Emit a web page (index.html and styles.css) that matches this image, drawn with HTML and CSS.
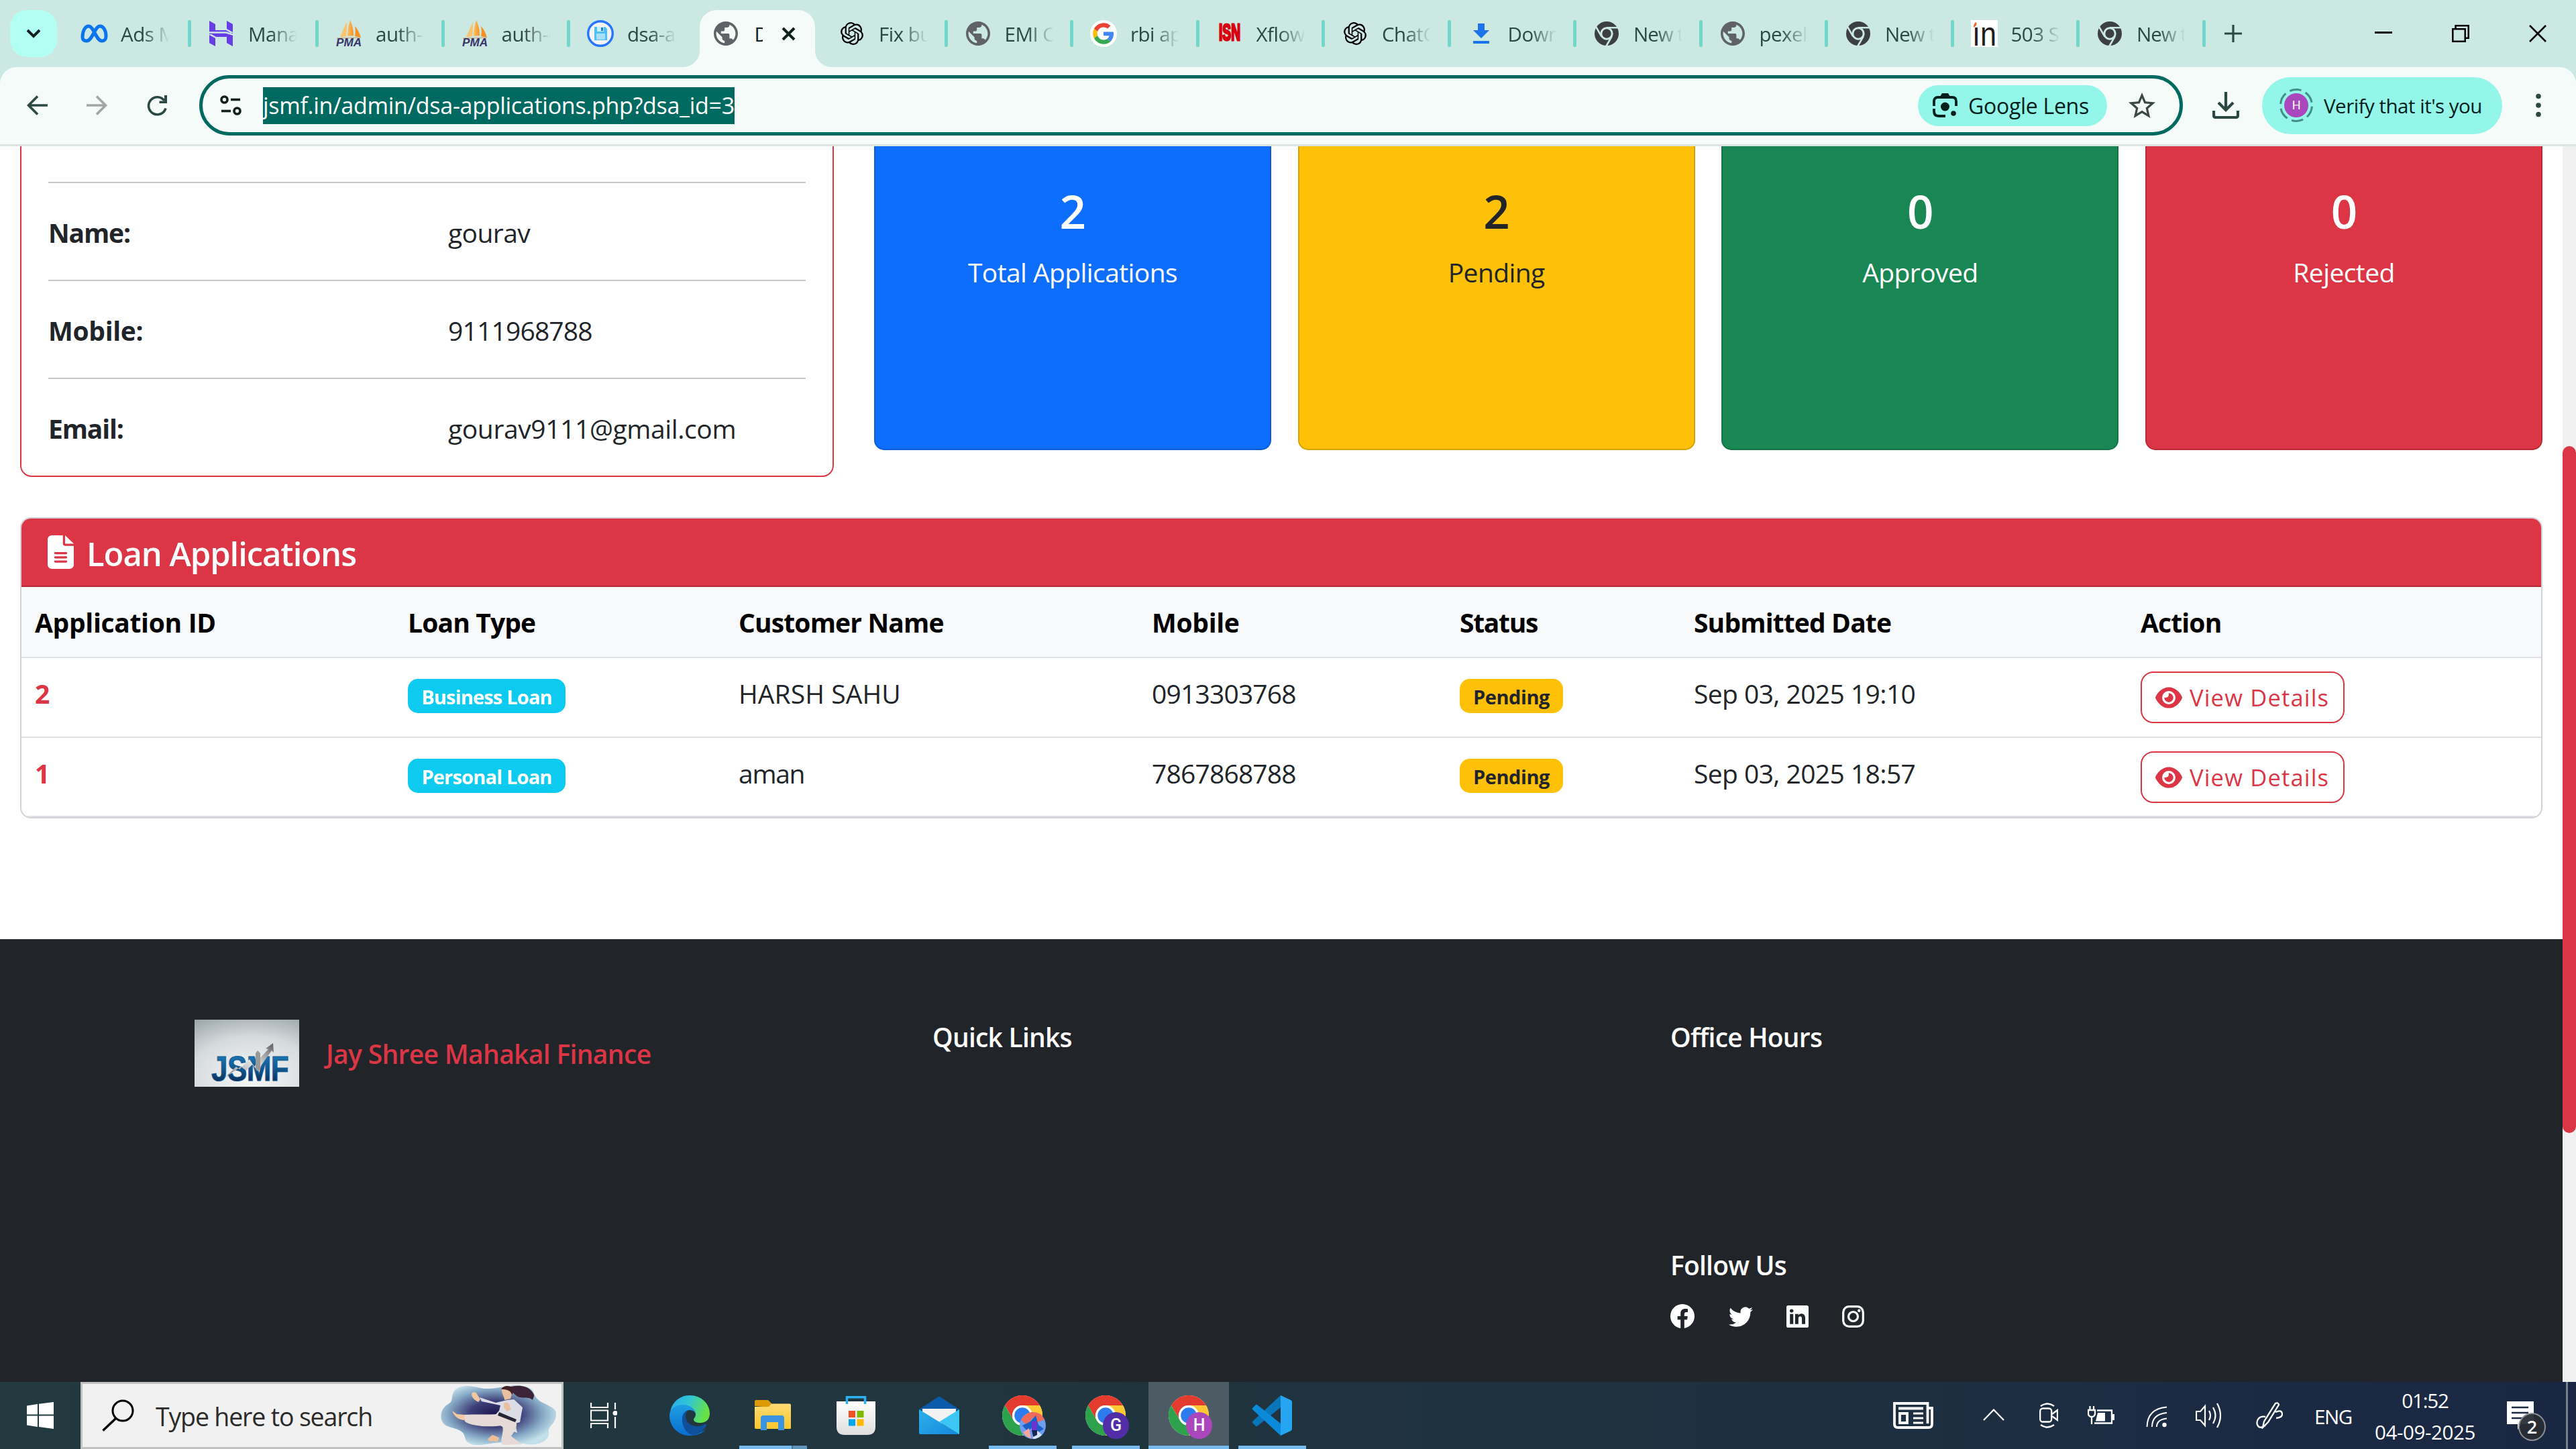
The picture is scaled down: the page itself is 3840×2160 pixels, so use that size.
FILE: index.html
```html
<!DOCTYPE html>
<html lang="en">
<head>
<meta charset="utf-8">
<title>DSA Applications</title>
<link rel="stylesheet" href="styles.css">
</head>
<body>
<svg class="defs" aria-hidden="true">
  <defs>
    <linearGradient id="gEdge1" x1="0" y1="0" x2="1" y2="0.3"><stop offset="0" stop-color="#2aa9ec"/><stop offset=".5" stop-color="#31c5d5"/><stop offset="1" stop-color="#66e248"/></linearGradient>
    <linearGradient id="gEdge2" x1="0" y1="0" x2="0" y2="1"><stop offset="0" stop-color="#1f9fe3"/><stop offset="1" stop-color="#0a6dd0"/></linearGradient>
    <linearGradient id="gFolder" x1="0" y1="0" x2="0" y2="1"><stop offset="0" stop-color="#ffdb73"/><stop offset="1" stop-color="#fcc72e"/></linearGradient>
    <linearGradient id="gStore" x1="0" y1="0" x2="0" y2="1"><stop offset="0" stop-color="#ffffff"/><stop offset="1" stop-color="#dedede"/></linearGradient>
    <linearGradient id="gMail" x1="0" y1="0" x2="1" y2="1"><stop offset="0" stop-color="#2fb0ec"/><stop offset="1" stop-color="#1489dc"/></linearGradient>
    <linearGradient id="gInk" x1="0" y1="0" x2="0" y2="1"><stop offset="0" stop-color="#1d84c4"/><stop offset=".5" stop-color="#12588f"/><stop offset="1" stop-color="#08193f"/></linearGradient>
    <linearGradient id="gSteel" x1="0" y1="1" x2="1" y2="0"><stop offset="0" stop-color="#8b8b8b"/><stop offset=".5" stop-color="#e2e2e2"/><stop offset="1" stop-color="#5c5c5c"/></linearGradient>
    <radialGradient id="gPaper" cx=".55" cy=".85" r="1"><stop offset="0" stop-color="#f7f8f8"/><stop offset=".6" stop-color="#d5dadc"/><stop offset="1" stop-color="#9ba5aa"/></radialGradient>
    <radialGradient id="gSplash" cx=".47" cy=".48" r=".55"><stop offset="0" stop-color="#1c1650"/><stop offset=".4" stop-color="#3d3f78"/><stop offset=".75" stop-color="#86a9c6"/><stop offset="1" stop-color="#c3e0ea"/></radialGradient>
    <linearGradient id="gSail" x1="0" y1="0" x2="1" y2="0"><stop offset="0" stop-color="#fbc36b"/><stop offset="1" stop-color="#f7901e"/></linearGradient>
  </defs>
  <symbol id="globe" viewBox="2 2 20 20"><path d="M12 2C6.48 2 2 6.48 2 12s4.48 10 10 10 10-4.48 10-10S17.52 2 12 2zm-1 17.93c-3.95-.49-7-3.85-7-7.93 0-.62.08-1.21.21-1.79L9 15v1c0 1.1.9 2 2 2v1.93zm6.9-2.54c-.26-.81-1-1.39-1.9-1.39h-1v-3c0-.55-.45-1-1-1H8v-2h2c.55 0 1-.45 1-1V7h2c1.1 0 2-.9 2-2v-.41c2.93 1.19 5 4.06 5 7.41 0 2.08-.8 3.97-2.1 5.39z" fill="#5f6368"/></symbol>
  <symbol id="openai" viewBox="0 0 24 24"><path d="M22.2819 9.8211a5.9847 5.9847 0 0 0-.5157-4.9108 6.0462 6.0462 0 0 0-6.5098-2.9A6.0651 6.0651 0 0 0 4.9807 4.1818a5.9847 5.9847 0 0 0-3.9977 2.9 6.0462 6.0462 0 0 0 .7427 7.0966 5.98 5.98 0 0 0 .511 4.9107 6.051 6.051 0 0 0 6.5146 2.9001A5.9847 5.9847 0 0 0 13.2599 24a6.0557 6.0557 0 0 0 5.7718-4.2058 5.9894 5.9894 0 0 0 3.9977-2.9001 6.0557 6.0557 0 0 0-.7475-7.0729zm-9.022 12.6081a4.4755 4.4755 0 0 1-2.8764-1.0408l.1419-.0804 4.7783-2.7582a.7948.7948 0 0 0 .3927-.6813v-6.7369l2.02 1.1686a.071.071 0 0 1 .038.052v5.5826a4.504 4.504 0 0 1-4.4945 4.4944zm-9.6607-4.1254a4.4708 4.4708 0 0 1-.5346-3.0137l.142.0852 4.783 2.7582a.7712.7712 0 0 0 .7806 0l5.8428-3.3685v2.3324a.0804.0804 0 0 1-.0332.0615L9.74 19.9502a4.4992 4.4992 0 0 1-6.1408-1.6464zM2.3408 7.8956a4.485 4.485 0 0 1 2.3655-1.9728V11.6a.7664.7664 0 0 0 .3879.6765l5.8144 3.3543-2.0201 1.1685a.0757.0757 0 0 1-.071 0l-4.8303-2.7865A4.504 4.504 0 0 1 2.3408 7.872zm16.5963 3.8558L13.1038 8.364 15.1192 7.2a.0757.0757 0 0 1 .071 0l4.8303 2.7913a4.4944 4.4944 0 0 1-.6765 8.1042v-5.6772a.79.79 0 0 0-.407-.667zm2.0107-3.0231l-.142-.0852-4.7735-2.7818a.7759.7759 0 0 0-.7854 0L9.409 9.2297V6.8974a.0662.0662 0 0 1 .0284-.0615l4.8303-2.7866a4.4992 4.4992 0 0 1 6.6802 4.66zM8.3065 12.863l-2.02-1.1638a.0804.0804 0 0 1-.038-.0567V6.0742a4.4992 4.4992 0 0 1 7.3757-3.4537l-.142.0805L8.704 5.459a.7948.7948 0 0 0-.3927.6813zm1.0976-2.3654l2.602-1.4998 2.6069 1.4998v2.9994l-2.5974 1.4997-2.6067-1.4997Z"/></symbol>
  <symbol id="chromeMono" viewBox="0 0 40 40"><circle cx="20" cy="20" r="18" fill="#3c4043"/><path d="M20 11.2H37.2M12.4 24.4L4 9.8M27.6 24.4L19.2 39" stroke="#cce8e2" stroke-width="2.6" fill="none"/><circle cx="20" cy="20" r="8.2" fill="#3c4043" stroke="#cce8e2" stroke-width="3"/></symbol>
  <symbol id="pma" viewBox="0 0 40 40"><path d="M17 3C13 10 10 18 7 26l9-2c1-8 1-14 1-21z" fill="#fbc36b"/><path d="M22 0c-3 9-4 17-4 24l9-1C27 14 25 7 22 0z" fill="url(#gSail)"/><path d="M29 9c1 6 1 10 0 15l9 2C36 19 33 13 29 9z" fill="#f7901e"/><path d="M2 27l36-1" stroke="#c9b28f" stroke-width="1.5"/><text x="20" y="38.5" text-anchor="middle" textLength="38" lengthAdjust="spacingAndGlyphs" class="pma-text">PMA</text></symbol>
  <symbol id="chrome" viewBox="0 0 48 48"><circle cx="24" cy="24" r="24" fill="#fff"/><path d="M3.2 12A24 24 0 0 1 44.8 12H24A12 12 0 0 0 13.6 30z" fill="#e33b2e"/><path d="M44.8 12A24 24 0 0 1 24 48L34.4 30A12 12 0 0 0 24 12z" fill="#fcc934"/><path d="M3.2 12A24 24 0 0 0 24 48L34.4 30A12 12 0 0 1 13.6 30z" fill="#2da14c"/><circle cx="24" cy="24" r="12" fill="#fff"/><circle cx="24" cy="24" r="9.4" fill="#2c7bef"/></symbol>
  <symbol id="eye" viewBox="0 0 576 512"><path d="M288 32c-80.8 0-145.5 36.8-192.6 80.6C48.6 156 17.3 208 2.5 243.7c-3.3 7.9-3.3 16.7 0 24.6C17.3 304 48.6 356 95.4 399.4C142.5 443.2 207.2 480 288 480s145.5-36.8 192.6-80.6c46.8-43.5 78.1-95.4 93-131.1c3.3-7.9 3.3-16.7 0-24.6c-14.9-35.7-46.2-87.7-93-131.1C433.5 68.8 368.8 32 288 32zM144 256a144 144 0 1 1 288 0 144 144 0 1 1 -288 0zm144-64c0 35.3-28.7 64-64 64c-7.1 0-13.9-1.2-20.3-3.3c-5.5-1.8-11.9 1.6-11.7 7.4c.3 6.9 1.3 13.8 3.2 20.7c13.7 51.2 66.4 81.6 117.6 67.9s81.6-66.4 67.9-117.6c-11.1-41.5-47.8-69.4-88.6-71.1c-5.8-.2-9.2 6.1-7.4 11.7c2.1 6.4 3.3 13.2 3.3 20.3z" fill="#dc3545"/></symbol>
</svg>

<header class="tabstrip">
  <button class="tab-search"><svg width="22" height="14" viewBox="0 0 22 14"><path d="M2 2l9 9 9-9" fill="none" stroke="#10201d" stroke-width="4"/></svg></button>
  <div class="tab wide"><i class="fav"><svg width="41" height="28" viewBox="0 0 41 28"><path d="M3 19C3 10 7 3 12 3c8 0 11 22 20 22 4 0 6-3 6-7C38 9 34 3 29 3 21 3 18 25 9 25c-4 0-6-2-6-6z" fill="none" stroke="#0a74ee" stroke-width="5"/></svg></i><span class="tab-title">Ads Manager</span></div>
  <div class="tab wide"><i class="fav"><svg width="36" height="40" viewBox="0 0 36 40"><path d="M0 1l9 5v9l16 0 10 6H0zM26 1l9 5v12l-9-5zM35 39l-9-5v-9l-16 0-10-6H35zM9 39l-9-5V22l9 5z" fill="#673de6"/><path d="M0 18.5H25L35 21.5" stroke="#cce8e2" stroke-width="2.5" fill="none"/></svg></i><span class="tab-title">Manage</span></div>
  <div class="tab"><i class="fav"><svg width="40" height="40"><use href="#pma"/></svg></i><span class="tab-title">auth-db</span></div>
  <div class="tab"><i class="fav"><svg width="40" height="40"><use href="#pma"/></svg></i><span class="tab-title">auth-db</span></div>
  <div class="tab no-sep"><i class="fav"><svg width="40" height="40" viewBox="0 0 40 40"><circle cx="20" cy="20" r="18.3" fill="#f4f4f6" stroke="#2676ff" stroke-width="3.4"/><path d="M11 10h16l3 3v17H11z" fill="#4fc0f7"/><path d="M15 10h10v7H15z" fill="#c9ecfb"/><path d="M21 11h3v5h-3z" fill="#1f7fc4"/><path d="M14 20h13v9H14z" fill="#a9def8"/></svg></i><span class="tab-title">dsa-app</span></div>
  <div class="tab active"><i class="fav"><svg width="36" height="36"><use href="#globe"/></svg></i><span class="tab-title">DSA</span><svg class="tab-close" width="21" height="21" viewBox="0 0 21 21"><path d="M2 2l17 17M19 2L2 19" stroke="#10201d" stroke-width="4"/></svg></div>
  <div class="tab"><i class="fav"><svg width="34" height="34"><use href="#openai"/></svg></i><span class="tab-title">Fix bug</span></div>
  <div class="tab"><i class="fav"><svg width="36" height="36"><use href="#globe"/></svg></i><span class="tab-title">EMI Cal</span></div>
  <div class="tab"><i class="fav"><svg width="40" height="40" viewBox="-6.5 -6.5 61 61"><circle cx="24" cy="24" r="30.5" fill="#fff"/><path fill="#ea4335" d="M24 9.5c3.54 0 6.71 1.22 9.21 3.6l6.85-6.85C35.9 2.38 30.47 0 24 0 14.62 0 6.51 5.38 2.56 13.22l7.98 6.19C12.43 13.72 17.74 9.5 24 9.5z"/><path fill="#4285f4" d="M46.98 24.55c0-1.57-.15-3.09-.38-4.55H24v9.02h12.94c-.58 2.96-2.26 5.48-4.78 7.18l7.73 6c4.51-4.18 7.09-10.36 7.09-17.65z"/><path fill="#fbbc05" d="M10.53 28.59c-.48-1.45-.76-2.99-.76-4.59s.27-3.14.76-4.59l-7.98-6.19C.92 16.46 0 20.12 0 24c0 3.88.92 7.54 2.56 10.78l7.97-6.19z"/><path fill="#34a853" d="M24 48c6.48 0 11.93-2.13 15.89-5.81l-7.73-6c-2.15 1.45-4.92 2.3-8.16 2.3-6.26 0-11.57-4.22-13.47-9.91l-7.98 6.19C6.51 42.62 14.62 48 24 48z"/></svg></i><span class="tab-title">rbi app</span></div>
  <div class="tab"><i class="fav"><svg width="36" height="40" viewBox="0 0 36 40"><text x="2" y="30" textLength="32" lengthAdjust="spacingAndGlyphs" class="isn-text">ISN</text></svg></i><span class="tab-title">Xflow p</span></div>
  <div class="tab"><i class="fav"><svg width="34" height="34"><use href="#openai"/></svg></i><span class="tab-title">ChatGPT</span></div>
  <div class="tab"><i class="fav"><svg width="24" height="30" viewBox="0 0 24 30"><path d="M7 0h10v10h7L12 22 0 10h7zM0 26h24v4H0z" fill="#1a73e8"/></svg></i><span class="tab-title">Downl</span></div>
  <div class="tab"><i class="fav"><svg width="40" height="40"><use href="#chromeMono"/></svg></i><span class="tab-title new">New tab</span></div>
  <div class="tab"><i class="fav"><svg width="36" height="36"><use href="#globe"/></svg></i><span class="tab-title">pexels-</span></div>
  <div class="tab"><i class="fav"><svg width="40" height="40"><use href="#chromeMono"/></svg></i><span class="tab-title new">New tab</span></div>
  <div class="tab"><i class="fav"><svg width="40" height="40" viewBox="0 0 40 40"><path d="M0 0h40v40H0z" fill="#fff"/><text x="2" y="38" textLength="36" lengthAdjust="spacingAndGlyphs" class="in-text">ın</text><path d="M4 11c0-4 1-7 4-8 1 3 0 6-4 8z" fill="#f26522"/></svg></i><span class="tab-title">503 Ser</span></div>
  <div class="tab"><i class="fav"><svg width="40" height="40"><use href="#chromeMono"/></svg></i><span class="tab-title new">New tab</span></div>
  <svg class="new-tab" width="26" height="26" viewBox="0 0 26 26"><path d="M13 0v26M0 13h26" stroke="#2c4843" stroke-width="3.2"/></svg>
  <div class="win-buttons">
    <svg width="26" height="26" viewBox="0 0 26 26"><path d="M0 11.5h26" stroke="#000" stroke-width="3"/></svg>
    <svg width="26" height="26" viewBox="0 0 26 26"><path d="M1.3 6.3h18.4v18.4H1.3zM5.5 6V1.3h19.2v18.4H20" fill="none" stroke="#000" stroke-width="2.5"/></svg>
    <svg width="26" height="26" viewBox="0 0 26 26"><path d="M1 1l24 24M25 1L1 25" stroke="#000" stroke-width="2.5"/></svg>
  </div>
</header>

<nav class="toolbar">
  <svg class="nav-icon back" width="31" height="30" viewBox="0 0 31 30"><path d="M16 1.5L2.5 15 16 28.5M3 15h28" fill="none" stroke="#2c4843" stroke-width="3.6"/></svg>
  <svg class="nav-icon fwd" width="31" height="30" viewBox="0 0 31 30"><path d="M15 1.5L28.5 15 15 28.5M28 15H0" fill="none" stroke="#a1a6a5" stroke-width="3.6"/></svg>
  <svg class="nav-icon reload" width="32" height="31" viewBox="0 0 32 31"><path d="M28 19.5A13 13 0 1 1 26 8" fill="none" stroke="#2c4843" stroke-width="3.6"/><path d="M30 0v12H18.5v-3.5H26V0z" fill="#2c4843"/></svg>
  <div class="omnibox">
    <svg class="tune" width="32" height="30" viewBox="0 0 32 30"><g fill="none" stroke="#10201d" stroke-width="3.6"><circle cx="6.5" cy="6.5" r="4.5"/><path d="M16 6.5h14"/><circle cx="25.5" cy="23.5" r="4.5"/><path d="M2 23.5h14"/></g></svg>
    <span class="url">jsmf.in/admin/dsa-applications.php?dsa_id=3</span>
    <span class="lens"><svg width="37" height="36" viewBox="0 0 37 36"><g fill="none" stroke="#00201c" stroke-width="3.8"><path d="M2 19V12q0-6 6-6h21q6 0 6 6v7"/><path d="M2 23v4q0 7 7 7h10"/></g><path d="M11 5l3-5h9l3 5z" fill="#00201c"/><circle cx="18.5" cy="20" r="6.5" fill="#00201c"/><circle cx="31" cy="30" r="3.8" fill="#00201c"/></svg><span>Google Lens</span></span>
    <svg class="star" width="40" height="38" viewBox="2 2 20 19"><path d="M22 9.24l-7.19-.62L12 2 9.19 8.63 2 9.24l5.46 4.73L5.82 21 12 17.27 18.18 21l-1.63-7.03L22 9.24zM12 15.4l-3.76 2.27 1-4.28-3.32-2.88 4.38-.38L12 6.1l1.71 4.04 4.38.38-3.32 2.88 1 4.28L12 15.4z" fill="#3a4745"/></svg>
  </div>
  <svg class="download" width="40" height="40" viewBox="0 0 40 40"><path d="M20 0v26M9 16l11 11 11-11M2 28v7q0 3 3 3h30q3 0 3-3v-7" fill="none" stroke="#2c4843" stroke-width="4.2"/></svg>
  <div class="profile"><svg width="52" height="52" viewBox="0 0 52 52"><circle cx="26" cy="26" r="23.5" fill="none" stroke="#3f8f86" stroke-width="3" stroke-dasharray="17.6 7" transform="rotate(4 26 26)"/><circle cx="26" cy="26" r="18" fill="#ab47bc"/><text x="26" y="32" text-anchor="middle" class="avatar-letter">H</text></svg><span>Verify that it's you</span></div>
  <svg class="dots" width="8" height="36" viewBox="0 0 8 36"><g fill="#2c4843"><circle cx="4" cy="4.5" r="3.8"/><circle cx="4" cy="18" r="3.8"/><circle cx="4" cy="31.5" r="3.8"/></g></svg>
</nav>

<div class="viewport">
  <main class="page">
    <section class="summary">
      <div class="info-card">
        <div class="info-row head"></div>
        <div class="info-row"><b>Name:</b><span>gourav</span></div>
        <div class="info-row"><b class="loose">Mobile:</b><span class="num">9111968788</span></div>
        <div class="info-row last"><b>Email:</b><span class="mail">gourav9111@gmail.com</span></div>
      </div>
      <div class="stats">
        <div class="stat blue"><strong>2</strong><span>Total Applications</span></div>
        <div class="stat yellow"><strong>2</strong><span>Pending</span></div>
        <div class="stat green"><strong>0</strong><span>Approved</span></div>
        <div class="stat red"><strong>0</strong><span>Rejected</span></div>
      </div>
    </section>
    <section class="loans">
      <h5><svg width="39" height="50" viewBox="0 0 384 512" preserveAspectRatio="none"><path d="M64 0C28.7 0 0 28.7 0 64V448c0 35.3 28.7 64 64 64H320c35.3 0 64-28.7 64-64V160H256c-17.7 0-32-14.3-32-32V0H64zM256 0V128H384L256 0zM112 256H272c8.8 0 16 7.2 16 16s-7.2 16-16 16H112c-8.8 0-16-7.2-16-16s7.2-16 16-16zm0 64H272c8.8 0 16 7.2 16 16s-7.2 16-16 16H112c-8.8 0-16-7.2-16-16s7.2-16 16-16zm0 64H272c8.8 0 16 7.2 16 16s-7.2 16-16 16H112c-8.8 0-16-7.2-16-16s7.2-16 16-16z" fill="#fff"/></svg><span>Loan Applications</span></h5>
      <table>
        <colgroup><col class="c1"><col class="c2"><col class="c3"><col class="c4"><col class="c5"><col class="c6"><col class="c7"></colgroup>
        <thead><tr><th class="loose">Application ID</th><th>Loan Type</th><th>Customer Name</th><th class="loose">Mobile</th><th class="tight">Status</th><th>Submitted Date</th><th>Action</th></tr></thead>
        <tbody>
          <tr><td class="id">2</td><td class="pill"><span class="badge info">Business Loan</span></td><td class="caps">HARSH SAHU</td><td class="num">0913303768</td><td class="pill"><span class="badge warn">Pending</span></td><td>Sep 03, 2025 19:10</td><td class="act"><a class="btn"><svg width="40" height="36"><use href="#eye"/></svg><span>View Details</span></a></td></tr>
          <tr><td class="id">1</td><td class="pill"><span class="badge info">Personal Loan</span></td><td class="tight">aman</td><td class="num">7867868788</td><td class="pill"><span class="badge warn">Pending</span></td><td>Sep 03, 2025 18:57</td><td class="act"><a class="btn"><svg width="40" height="36"><use href="#eye"/></svg><span>View Details</span></a></td></tr>
        </tbody>
      </table>
    </section>
    <footer class="footer">
      <div class="brand">
        <svg width="156" height="100" viewBox="0 0 156 100"><path d="M0 0h156v100H0z" fill="url(#gPaper)"/><text x="25" y="91" textLength="115" lengthAdjust="spacingAndGlyphs" class="logo-text">JSMF</text><path d="M46 86l16-16 5 4 15-15 7 11 9-13 12-13-4-1 11-8 1 14-3-3-21 30-8-9-9 9-8-6z" fill="url(#gSteel)"/><path d="M91 50l3-4 4 4v24l-4 3-3-3z" fill="#999"/></svg>
        <span>Jay Shree Mahakal Finance</span>
      </div>
      <div class="fcol"><h6>Quick Links</h6></div>
      <div class="fcol"><h6>Office Hours</h6>
        <h6 class="follow">Follow Us</h6>
        <div class="social">
          <svg width="36" height="36" viewBox="0 0 16 16"><path fill="#fff" d="M16 8.049c0-4.446-3.582-8.05-8-8.05C3.58 0-.002 3.603-.002 8.05c0 4.017 2.926 7.347 6.75 7.951v-5.625h-2.03V8.05H6.75V6.275c0-2.017 1.195-3.131 3.022-3.131.876 0 1.791.157 1.791.157v1.98h-1.009c-.993 0-1.303.621-1.303 1.258v1.51h2.218l-.354 2.326H9.25V16c3.824-.604 6.75-3.934 6.75-7.951z"/></svg>
          <svg width="36" height="36" viewBox="0 0 16 16"><path fill="#fff" d="M5.026 15c6.038 0 9.341-5.003 9.341-9.334 0-.14 0-.282-.006-.422A6.685 6.685 0 0 0 16 3.542a6.658 6.658 0 0 1-1.889.518 3.301 3.301 0 0 0 1.447-1.817 6.533 6.533 0 0 1-2.087.793A3.286 3.286 0 0 0 7.875 6.03a9.325 9.325 0 0 1-6.767-3.429 3.289 3.289 0 0 0 1.018 4.382A3.323 3.323 0 0 1 .64 6.575v.045a3.288 3.288 0 0 0 2.632 3.218 3.203 3.203 0 0 1-.865.115 3.23 3.23 0 0 1-.614-.057 3.283 3.283 0 0 0 3.067 2.277A6.588 6.588 0 0 1 .78 13.58a6.32 6.32 0 0 1-.78-.045A9.344 9.344 0 0 0 5.026 15z"/></svg>
          <svg width="33" height="33" viewBox="0 0 16 16"><path fill="#fff" d="M0 1.146C0 .513.526 0 1.175 0h13.65C15.474 0 16 .513 16 1.146v13.708c0 .633-.526 1.146-1.175 1.146H1.175C.526 16 0 15.487 0 14.854V1.146zm4.943 12.248V6.169H2.542v7.225h2.401zm-1.2-8.212c.837 0 1.358-.554 1.358-1.248-.015-.709-.52-1.248-1.342-1.248-.822 0-1.359.54-1.359 1.248 0 .694.521 1.248 1.327 1.248h.016zm4.908 8.212V9.359c0-.216.016-.432.08-.586.173-.431.568-.878 1.232-.878.869 0 1.216.662 1.216 1.634v3.865h2.401V9.25c0-2.22-1.184-3.252-2.764-3.252-1.274 0-1.845.7-2.165 1.193v.025h-.016a5.54 5.54 0 0 1 .016-.025V6.169h-2.4c.03.678 0 7.225 0 7.225h2.4z"/></svg>
          <svg width="33" height="33" viewBox="0 0 33 33"><g fill="none" stroke="#fff" stroke-width="3.2"><rect x="1.7" y="1.7" width="29.6" height="29.6" rx="8.5"/><circle cx="16.5" cy="16.5" r="7"/></g><circle cx="25.3" cy="7.7" r="2.2" fill="#fff"/></svg>
        </div>
      </div>
    </footer>
  </main>
  <div class="scrollbar"><div class="thumb"></div></div>
</div>

<div class="taskbar">
  <div class="start"><svg width="40" height="40" viewBox="0 0 40 40"><path d="M0 5.5L16 3v15.5H0zM18 2.7L40 0v18.5H18zM0 20.5h16V37L0 34.5zM18 20.5h22V40l-22-2.9z" fill="#fff"/></svg></div>
  <div class="search">
    <svg class="glass" width="48" height="48" viewBox="0 0 48 48"><circle cx="31" cy="17" r="15" fill="none" stroke="#000" stroke-width="3"/><path d="M21 28L1.5 46.5" stroke="#000" stroke-width="3.4"/></svg>
    <span>Type here to search</span>
    <svg class="art" width="172" height="90" viewBox="0 0 172 90"><path d="M28 3C45-3 55 6 72 5c20-1 35-8 55-3 17 4 7 15 25 24 13 6 22 10 20 20-3 14-12 14-11 24 1 12-13 20-32 18-25-3-40-4-55-1-22 4-36 3-38-10C33 66 24 66 10 61-2 56-2 40 6 32c6-6 10-4 11-14 1-7 3-12 11-15z" fill="url(#gSplash)"/><path d="M99 4c12-5 28-5 36 4 7 8 3 9 2 14-8-7-16 0-25-7z" fill="#3d2338"/><path d="M58 18l24 8 17-4 10-1 13 12-4 22-7 2 3 14-19-7-20-13 12-13 2-8-28-6z" fill="#dcdce6"/><path d="M91 7c0-6 14-7 16 0 0 5-2 8-3 13l-9 2c0-5-4-8-4-15z" fill="#eabf9f"/><path d="M90 6c4-7 15-6 18 0 1 4-2 8-2 8-2-7-8-8-16-8z" fill="#432127"/><path d="M46 13c1-4 7-3 8 0l5 8-3 4c-6-3-10-7-10-12z" fill="#f0c6a3"/><path d="M94 27q6-3 8 1l3 8-6 3-5-6z" fill="#e9bf9f"/><path d="M33 44c20-1 38 0 54-1l24 8c6 11-3 20-6 25l16 12-29 1c-5-8 3-18 0-29-20 3-47 1-56-6z" fill="#e5dad6"/><path d="M17 38l7 5 12 1-1 8c-7 0-15-5-18-14z" fill="#f2c7a5"/><path d="M87 40l26 11-2 4-26-10z" fill="#242638"/><path d="M70 80l7-6 10 4-2 6-13-1z" fill="#eebd9a"/></svg>
  </div>
  <div class="slot"><svg width="40" height="38" viewBox="0 0 40 38"><g fill="none" stroke="#fff" stroke-width="2.2"><path d="M1 0v7h25V0M1 11.5h25v15H1zM1 38v-7h25v7M37 0v10M37 21v17"/></g><circle cx="37" cy="15.5" r="3.5" fill="#fff"/></svg></div>
  <div class="slot app"><svg width="60" height="60" viewBox="0 0 60 60"><path d="M1 25C4 8 17 0 30 0c18 0 30 13 30 27 0 9-6 14-14 14-6 0-10-2-10-5 0-2 3-3 3-8 0-6-8-13-18-13C10 15 3 20 1 25z" fill="url(#gEdge1)"/><path d="M30 60C12 60 0 46 0 30c0-9 8-16 20-16 11 0 19 7 19 14-1-4-5-6-9-6-6 0-11 6-11 14 0 13 10 20 20 20 7 0 12-3 15-5-5 6-14 9-24 9z" fill="url(#gEdge2)"/><path d="M19 36c0-6 2-11 8-13-4 4-4 11 0 17 6 7 16 8 26 3 2-1 3 1 1 4-6 9-14 12-20 12-9-2-15-12-15-23z" fill="#104f9c"/></svg></div>
  <div class="slot app run explorer"><svg width="54" height="46" viewBox="0 0 54 46"><path d="M0 9V2q0-2 2-2h18l5 5v6z" fill="#dc9a06"/><path d="M0 10h21l4-4.5h27q2 0 2 2V42q0 1-2 1H2q-2 0-2-2z" fill="url(#gFolder)"/><path d="M9 45V27q0-4 4-4h27q4 0 4 4v18h-9V33H18v12z" fill="#3b94e0"/></svg></div>
  <div class="slot app"><svg width="58" height="58" viewBox="0 0 58 58"><path d="M0 8h58v38q0 12-12 12H12Q0 58 0 46z" fill="url(#gStore)"/><path d="M15.5 12V1.8h27V12" fill="none" stroke="#2cb1f2" stroke-width="3.6"/><path d="M18 22h10v10H18z" fill="#f25022"/><path d="M30.5 22h10v10h-10z" fill="#7fba00"/><path d="M18 34.5h10v10H18z" fill="#00a4ef"/><path d="M30.5 34.5h10v10h-10z" fill="#ffb900"/></svg></div>
  <div class="slot app"><svg width="60" height="56" viewBox="0 0 60 56"><path d="M0 19L26 2q4-4 8 0l26 17-30 17z" fill="#0a5cab"/><path d="M5 18h50v12L30 42 5 26z" fill="#f2f2f2"/><path d="M0 19l60 37H2q-2 0-2-2z" fill="url(#gMail)"/><path d="M60 19L30 37.5 60 56z" fill="#3cc6f4"/></svg></div>
  <div class="slot app run"><div class="chrome"><svg width="60" height="60"><use href="#chrome"/></svg><svg class="mini" width="39" height="40" viewBox="0 0 39 40"><ellipse cx="19.5" cy="20" rx="19.5" ry="20" fill="#6f9df0"/><path d="M2 12Q8 0 20 0T37 11L24 16 19 8 12 20z" fill="#f06a5a"/><path d="M4 20l12-6 8-9 4 14 8 6-8 5-7-9-9 8z" fill="#1b5fc9"/><path d="M18 14h8v13h-8z" fill="#6a35cf"/><path d="M5 30l9-6 3 15q-8-2-12-9z" fill="#f4a79f"/><path d="M19 32l8-4 6 6q-6 6-13 6z" fill="#d4e2f6"/><path d="M18 27h8v7l-6 3z" fill="#17274f"/></svg></div></div>
  <div class="slot app run"><div class="chrome"><svg width="60" height="60"><use href="#chrome"/></svg><span class="mini letter violet">G</span></div></div>
  <div class="slot app run current"><div class="chrome"><svg width="60" height="60"><use href="#chrome"/></svg><span class="mini letter pink">H</span></div></div>
  <div class="slot app run"><svg width="60" height="60" viewBox="0 0 60 60"><path d="M43 0v18L8 46q-2 1-3-1l-4-4q-1-2 1-3z" fill="#0876b9"/><path d="M43 60V42L8 14q-2-1-3 1l-4 4q-1 2 1 3z" fill="#0a8ad8"/><path d="M43 0l15 7q2 1 2 3v40q0 2-2 3l-15 7z" fill="#26a6f2"/></svg></div>
  <div class="tray">
    <svg class="t-news" width="60" height="40" viewBox="0 0 60 40"><g fill="none" stroke="#fff" stroke-width="3.8"><path d="M52 2H2v31q0 5 5 5h46q5 0 5-5V9h-5M51.5 0v32"/><path d="M8 9.5h37"/><path d="M10 17h11v14H10z"/><path d="M30 17h15M30 24h15M30 31h15" stroke-width="3"/></g></svg>
    <svg class="t-chev" width="32" height="18" viewBox="0 0 32 18"><path d="M1 17L16 1.5 31 17" fill="none" stroke="#fff" stroke-width="2.2"/></svg>
    <svg class="t-cam" width="28" height="38" viewBox="0 0 28 38"><g fill="none" stroke="#fff" stroke-width="2.3"><rect x="1.2" y="8.5" width="17" height="20" rx="4"/><path d="M19 17l8-6v15l-8-6M2 5q10-7 20 0M2 33q10 7 20 0"/></g></svg>
    <svg class="t-bat" width="40" height="28" viewBox="0 0 40 28"><path d="M14 6.5h22v19H10" fill="none" stroke="#fff" stroke-width="2.3"/><path d="M37 12h3v9h-3zM12 22.5L15 10h11v12.5z" fill="#fff"/><path d="M3.5 0v6M9 0v6M1 6h10v6q-1 4-5 4t-5-4zM6 16v11" fill="none" stroke="#fff" stroke-width="2.3"/></svg>
    <svg class="t-wifi" width="32" height="32" viewBox="0 0 32 32"><g fill="none" stroke="#fff" stroke-width="2"><path d="M1.5 31Q2 4 31 1.5M9 31Q9 12 31 10M16 31Q16 20 31 18.5"/></g><circle cx="27.5" cy="28" r="3.2" fill="#fff"/></svg>
    <svg class="t-vol" width="40" height="38" viewBox="0 0 40 38"><path d="M1 13h6l7-8v29l-7-8H1zM20 12q4 7 0 14M26 7q7 12 0 24M32 1q10 18 0 36" fill="none" stroke="#fff" stroke-width="2.2"/></svg>
    <svg class="t-pen" width="40" height="40" viewBox="0 0 40 40"><path d="M10 38l2-9L29 2q4-2 5 2L18 30zM14 22C4 20 0 28 2 34q3 7 12 1M29 15q9-4 10 2t-9 7" fill="none" stroke="#fff" stroke-width="2.3"/></svg>
    <span class="lang">ENG</span>
    <div class="clock"><span class="time">01:52</span><span class="date">04-09-2025</span></div>
    <div class="notif"><svg width="40" height="42" viewBox="0 0 40 42"><path d="M0 0h40v34H22l-6 8v-8H0z" fill="#fff"/><path d="M7 9h25M7 17h25M7 25h18" stroke="#1b2a40" stroke-width="2.6"/></svg><span class="count">2</span></div>
    <i class="peek"></i>
  </div>
</div>
</body>
</html>
```
FILE: styles.css
```css
* { box-sizing: border-box; }
body {
  margin: 0;
  width: 3840px;
  height: 2160px;
  overflow: hidden;
  display: flex;
  flex-direction: column;
  background: #fff;
  color: #212529;
  font-family: "Open Sans", "Noto Sans", sans-serif;
  font-size: 39px;
}
svg { display: block; flex: none; }
.defs { position: absolute; width: 0; height: 0; }
span, b, strong { white-space: nowrap; }

/* browser tab strip */
.tabstrip {
  height: 100px;
  flex: none;
  display: flex;
  align-items: center;
  background: #cce8e2;
}
.tab-search {
  width: 70px;
  height: 70px;
  margin: 0 10px 0 15px;
  padding: 0;
  border: 0;
  border-radius: 25px;
  background: #b2fff4;
  display: flex;
  align-items: center;
  justify-content: center;
}
.tab {
  position: relative;
  width: 187.5px;
  height: 100px;
  flex: none;
  display: flex;
  align-items: center;
}
.tab.wide { width: 190px; }
.tab::after {
  content: "";
  position: absolute;
  right: 0;
  top: 30px;
  width: 5px;
  height: 40px;
  border-radius: 2px;
  background: #71d7ca;
}
.tab.no-sep::after { display: none; }
.fav {
  width: 50px;
  margin-left: 20px;
  display: flex;
  justify-content: center;
  flex: none;
}
.tab-title {
  margin-left: 15px;
  width: 73px;
  overflow: hidden;
  font-size: 29.5px;
  line-height: 50px;
  padding-top: 1px;
  letter-spacing: -0.5px;
  color: #2c4843;
  -webkit-mask-image: linear-gradient(90deg, #000 45%, transparent);
  mask-image: linear-gradient(90deg, #000 45%, transparent);
}
.tab-title.new { letter-spacing: -1px; }
.tab.active .fav { margin-left: 19px; }
.tab.active::after { display: none; }
.tab.active::before {
  content: "";
  position: absolute;
  z-index: 0;
  left: -20px;
  top: 15px;
  width: 222px;
  height: 85px;
  background:
    radial-gradient(circle at 0 0, transparent 24.5px, #f4fbf9 25.5px) left bottom / 25px 25px no-repeat,
    radial-gradient(circle at 100% 0, transparent 24.5px, #f4fbf9 25.5px) right bottom / 25px 25px no-repeat;
}
.tab.active {
  background: linear-gradient(#f4fbf9, #f4fbf9) 5px 40px / 172px 60px no-repeat;
}
.tab.active .fav, .tab.active .tab-title, .tab-close { z-index: 2; }
.tab.active .fav::before {
  content: "";
  position: absolute;
  z-index: -1;
  left: 5px;
  top: 15px;
  width: 172px;
  height: 60px;
  border-radius: 25px 25px 0 0;
  background: #f4fbf9;
}
.tab.active .fav svg { z-index: 1; }
.tab.active .tab-title {
  width: 12px;
  margin-left: 18px;
  color: #10201d;
  -webkit-mask-image: none;
  mask-image: none;
}
.tab-close { margin-left: 28px; }
.new-tab { margin-left: 28px; }
.win-buttons { margin-left: auto; margin-right: 44px; display: flex; gap: 89px; }
.pma-text { font: italic 700 16px "Liberation Sans", sans-serif; fill: #35356b; }
.isn-text { font: 700 35px "Liberation Sans", sans-serif; fill: #d8000f; stroke: #d8000f; stroke-width: 3px; }
.in-text { font: 50px "Liberation Sans", sans-serif; fill: #201c1c; }

/* toolbar */
.tabstrip, .toolbar { position: relative; }
.toolbar {
  height: 118px;
  flex: none;
  display: flex;
  align-items: center;
  padding: 0 0 1px 40px;
  background:
    radial-gradient(circle at 100% 100%, transparent 24.5px, #cce8e2 25.5px) left top / 25px 25px no-repeat,
    radial-gradient(circle at 0 100%, transparent 24.5px, #cce8e2 25.5px) right top / 25px 25px no-repeat,
    #f4fbf9;
  border-bottom: 3px solid #dbe5e2;
}
.fwd { margin-left: 58px; }
.reload { margin-left: 59px; }
.omnibox {
  width: 2957px;
  height: 90px;
  margin-left: 46px;
  border: 5px solid #006a60;
  border-radius: 45px;
  display: flex;
  align-items: center;
}
.tune { margin-left: 26px; }
.url {
  margin-left: 32px;
  width: 703px;
  height: 55px;
  line-height: 54px;
  background: #006a60;
  color: #fff;
  font-size: 34px;
  letter-spacing: -0.008em;
}
.lens {
  margin-left: auto;
  width: 282px;
  height: 61px;
  border-radius: 31px;
  background: #93f6e9;
  color: #00201c;
  display: flex;
  align-items: center;
  padding-left: 22px;
  gap: 16px;
  font-size: 32px;
  font-weight: 500;
  letter-spacing: -0.009em;
}
.star { margin: 0 36px 0 32px; }
.download { margin-left: 44px; }
.profile {
  width: 358px;
  height: 85px;
  margin-left: 34px;
  padding-left: 25px;
  border-radius: 43px;
  background: #93f6e9;
  color: #00201c;
  display: flex;
  align-items: center;
  gap: 15px;
  font-size: 29.5px;
  letter-spacing: -0.017em;
}
.avatar-letter { font: 18px Roboto, sans-serif; fill: #fff; }
.dots { margin-left: 50px; }

/* page */
.viewport {
  height: 1842px;
  flex: none;
  display: flex;
  overflow: hidden;
}
.page { width: 3820px; flex: none; display: flex; flex-direction: column; letter-spacing: -0.015em; }
.scrollbar { width: 20px; background: #f0f0f0; padding-top: 447px; }
.thumb { height: 1024px; border-radius: 10px; background: #dc3545; }
.summary { display: flex; gap: 60px; padding-left: 30px; height: 493px; flex: none; }
.info-card {
  width: 1213px;
  padding: 0 40px;
  border: 2px solid #dc3545;
  border-top: 0;
  border-radius: 0 0 17px 17px;
  height: 493px;
}
.info-row {
  height: 146px;
  display: grid;
  grid-template-columns: 596px 1fr;
  align-items: center;
  border-bottom: 2px solid #c8c8c8;
  padding-top: 2px;
}
.info-row b { letter-spacing: -0.03em; }
.info-row .mail { letter-spacing: -0.01em; }
.num { letter-spacing: -0.021em; }
.page .tight { letter-spacing: -0.033em; }
.page .loose { letter-spacing: -0.008em; }
.page .caps { letter-spacing: 0.002em; }
.info-row.head { height: 55px; }
.info-row.last { border: 0; padding-top: 0; }
.stats { display: grid; grid-template-columns: repeat(4, 592px); gap: 39.7px; height: 453px; }
.stat {
  display: flex;
  flex-direction: column;
  align-items: center;
  border: 2px solid;
  border-top: 0;
  border-radius: 0 0 15px 15px;
  color: #fff;
}
.stat strong { font-size: 69px; font-weight: 600; line-height: 84px; margin-top: 54px; }
.stat span { line-height: 60px; margin-top: 20px; }
.blue { background: #0d6efd; border-color: #0b5cd6; }
.yellow { background: #ffc107; border-color: #d6a206; color: #212529; }
.green { background: #198754; border-color: #157347; }
.red { background: #dc3545; border-color: #b82c39; }

.loans {
  width: 3760px;
  margin: 60px 0 0 30px;
  height: 449px;
  flex: none;
  border: 2px solid #d2d3d4;
  border-radius: 16px;
  overflow: hidden;
}
.loans h5 {
  margin: 0;
  height: 102px;
  background: #dc3545;
  border-bottom: 2px solid #b52b39;
  color: #fff;
  font-size: 49px;
  font-weight: 600;
  letter-spacing: -0.022em;
  display: flex;
  align-items: center;
  padding-left: 39px;
  gap: 19px;
}
.loans h5 span { padding-top: 3px; }
table { width: 3756px; table-layout: fixed; border-collapse: separate; border-spacing: 0; }
.c1 { width: 556px; } .c2 { width: 493px; } .c3 { width: 616px; } .c4 { width: 459px; }
.c5 { width: 349px; } .c6 { width: 666px; } .c7 { width: 617px; }
th, td { text-align: left; vertical-align: top; padding: 23px 20px 0; line-height: 60px; border-bottom: 2px solid #dee2e6; }
th { height: 106px; background: #f8f9fa; color: #000; font-weight: 700; letter-spacing: -0.022em; }
td { height: 119px; }
tr:last-child td { height: 118px; }
.id { color: #dc3545; font-weight: 700; }
td.pill { padding-top: 31px; }
td.act { padding-top: 20px; }
.badge {
  display: flex;
  justify-content: center;
  align-items: center;
  height: 51px;
  border-radius: 15px;
  font-size: 29px;
  font-weight: 700;
  line-height: 51px;
  padding-top: 2px;
}
.info { width: 235px; background: #0dcaf0; color: #fff; letter-spacing: -0.028em; }
.warn { width: 154px; background: #ffc107; color: #212529; letter-spacing: -0.014em; }
.btn {
  width: 304px;
  height: 77px;
  border: 2px solid #dc3545;
  border-radius: 19px;
  color: #dc3545;
  display: flex;
  align-items: center;
  padding-left: 20px;
  gap: 11px;
  font-size: 34.5px;
  letter-spacing: 0.034em;
}

.footer {
  margin-top: 180px;
  flex: 1;
  background: #212529;
  color: #fff;
  display: grid;
  grid-template-columns: 1100px 1100px 1fr;
  padding: 120px 0 0 290px;
}
.brand { display: flex; gap: 40px; height: 100px; align-items: center; color: #dc3545; font-weight: 600; letter-spacing: -0.017em; }
.logo-text { font: 700 51px "Liberation Sans", sans-serif; fill: url(#gInk); stroke: #12588f; }
h6 { margin: 0; font-size: 39px; font-weight: 600; line-height: 50px; letter-spacing: -0.02em; padding-top: 1px; }
h6.follow { margin-top: 289px; }
.social { display: flex; align-items: center; margin-top: 33px; }
.social svg:nth-child(2) { margin-left: 51px; }
.social svg:nth-child(3) { margin-left: 50px; }
.social svg:nth-child(4) { margin-left: 50px; }

/* taskbar */
.taskbar {
  height: 100px;
  flex: none;
  display: flex;
  align-items: center;
  background: linear-gradient(90deg, #223940, #20343e 45%, #1e3040 70%, #1b2a43 88%, #1a2743);
  color: #fff;
}
.start { width: 120px; display: flex; justify-content: center; }
.search {
  width: 720px;
  height: 100px;
  border: 3px solid #c1c1c1;
  background: #f1f1f1;
  display: flex;
  align-items: center;
  color: #2b2b2b;
  font-size: 37.5px;
  letter-spacing: -0.031em;
  padding-left: 29px;
}
.search span { margin: 3px 0 0 32px; }
.art { margin-left: auto; margin-right: 8px; }
.slot { width: 120px; height: 100px; display: flex; align-items: center; justify-content: center; }
.slot.app { width: 120px; margin-left: 8px; position: relative; margin-right: -4px; }
.run::after {
  content: "";
  position: absolute;
  left: 10px;
  bottom: 0;
  width: 101px;
  height: 5px;
  background: #76b9ed;
}
.explorer::after { background: linear-gradient(90deg, #76b9ed 78px, #4a7590 78px, #4a7590 80px, #5f95bf 80px); }
.current { background: #4c5b64; }
.current::after { left: 0; width: 120px; }
.chrome { position: relative; }
.mini { position: absolute; left: 26px; top: 25px; }
.letter {
  width: 39px;
  height: 40px;
  border-radius: 50%;
  font: 500 25px/40px Roboto, sans-serif;
  text-align: center;
}
.violet { background: #512da8; }
.pink { background: #ab47bc; }
.tray { margin-left: auto; display: flex; align-items: center; height: 100px; flex: none; }
.t-chev { margin-left: 74px; margin-top: -3px; }
.t-cam { margin-left: 52px; }
.t-bat { margin-left: 44px; }
.t-wifi { margin-left: 47px; margin-top: 3px; }
.t-vol { margin-left: 42px; }
.t-pen { margin-left: 50px; }
.lang { margin: 2px 0 0 47px; font-size: 29.5px; width: 56px; letter-spacing: -0.05em; }
.clock {
  width: 150px;
  margin-left: 34px;
  padding-top: 2px;
  display: flex;
  flex-direction: column;
  align-items: center;
  font-size: 29.5px;
  line-height: 47px;
}
.time { letter-spacing: -0.04em; }
.date { letter-spacing: -0.013em; }
.notif { position: relative; margin-left: 47px; width: 40px; }
.count {
  position: absolute;
  left: 17px;
  top: 17px;
  width: 41px;
  height: 42px;
  border: 2px solid #8c9095;
  border-radius: 50%;
  background: rgba(40, 44, 50, .94);
  font-size: 27px;
  font-weight: 600;
  line-height: 38px;
  text-align: center;
}
.peek { width: 3px; height: 100px; background: #76808c; margin: 0 12px 0 48px; }
```
